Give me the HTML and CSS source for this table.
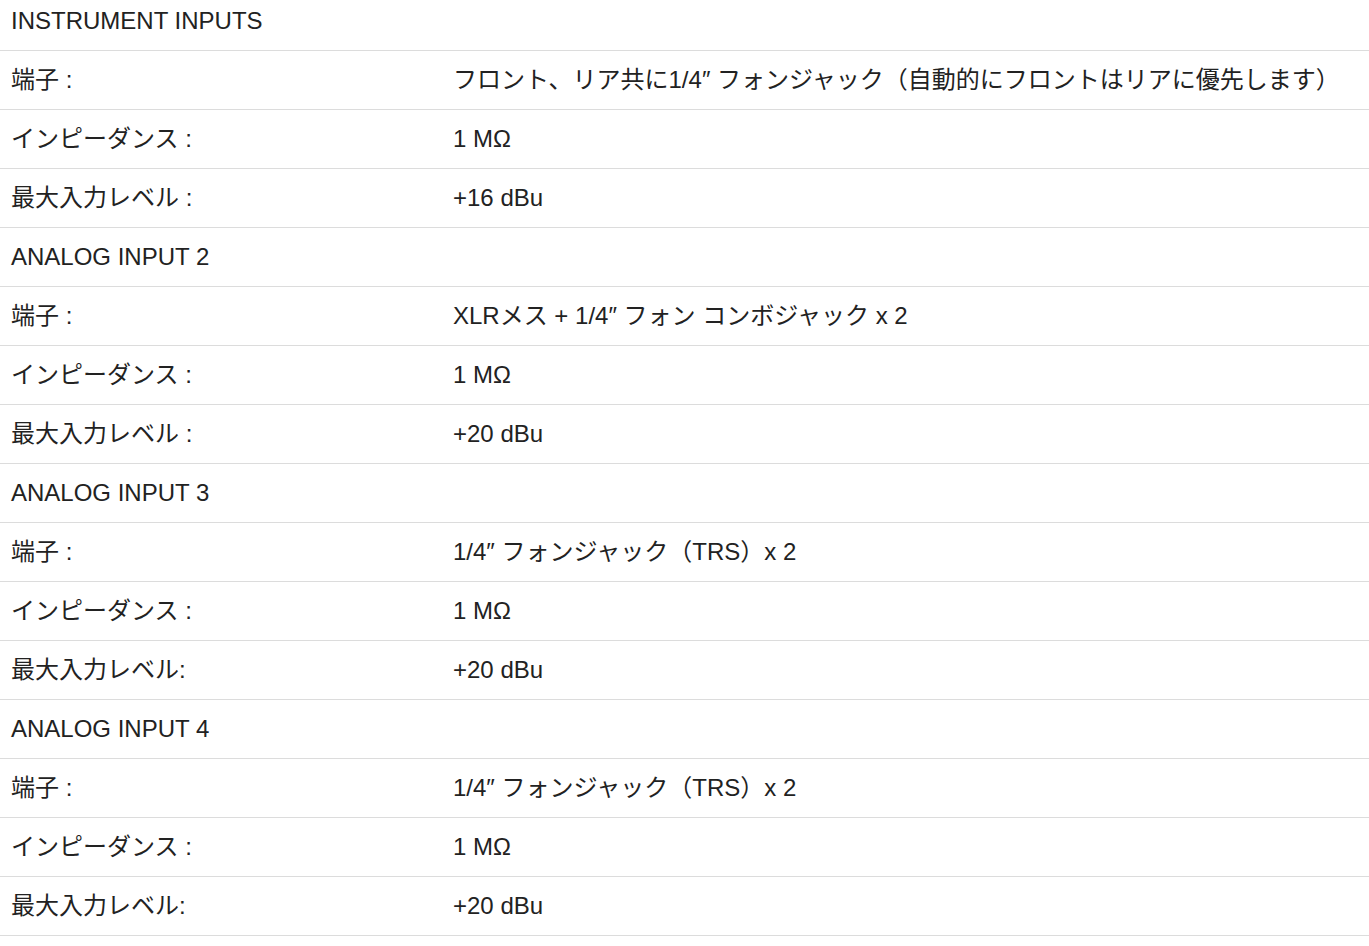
FILE: index.html
```html
<!DOCTYPE html>
<html lang="ja">
<head>
<meta charset="utf-8">
<link rel="stylesheet" href="styles.css">
</head>
<body>
<div class="spec">
  <div class="row head first"><span>INSTRUMENT INPUTS</span></div>
  <div class="row"><span>端子 :</span><span>フロント、リア共に1/4″ フォンジャック（自動的にフロントはリアに優先します）</span></div>
  <div class="row"><span>インピーダンス :</span><span>1 MΩ</span></div>
  <div class="row"><span>最大入力レベル :</span><span>+16 dBu</span></div>
  <div class="row head"><span>ANALOG INPUT 2</span></div>
  <div class="row"><span>端子 :</span><span>XLRメス + 1/4″ フォン コンボジャック x 2</span></div>
  <div class="row"><span>インピーダンス :</span><span>1 MΩ</span></div>
  <div class="row"><span>最大入力レベル :</span><span>+20 dBu</span></div>
  <div class="row head"><span>ANALOG INPUT 3</span></div>
  <div class="row"><span>端子 :</span><span>1/4″ フォンジャック（TRS）x 2</span></div>
  <div class="row"><span>インピーダンス :</span><span>1 MΩ</span></div>
  <div class="row"><span>最大入力レベル:</span><span>+20 dBu</span></div>
  <div class="row head"><span>ANALOG INPUT 4</span></div>
  <div class="row"><span>端子 :</span><span>1/4″ フォンジャック（TRS）x 2</span></div>
  <div class="row"><span>インピーダンス :</span><span>1 MΩ</span></div>
  <div class="row"><span>最大入力レベル:</span><span>+20 dBu</span></div>
</div>
</body>
</html>
```

FILE: styles.css
```css
html, body {
  margin: 0;
  padding: 0;
  background: #fff;
}
.spec {
  font-family: "Liberation Sans", Arial, "Noto Sans CJK JP", sans-serif;
  font-size: 24px;
  color: #222;
}
.row {
  display: grid;
  grid-template-columns: 442px 1fr;
  padding: 0 11px;
  height: 58px;
  line-height: 58px;
  border-bottom: 1px solid #dcdcdc;
  white-space: nowrap;
}
.row.first {
  height: 42px;
  line-height: 42px;
  padding-bottom: 8px;
}
```
